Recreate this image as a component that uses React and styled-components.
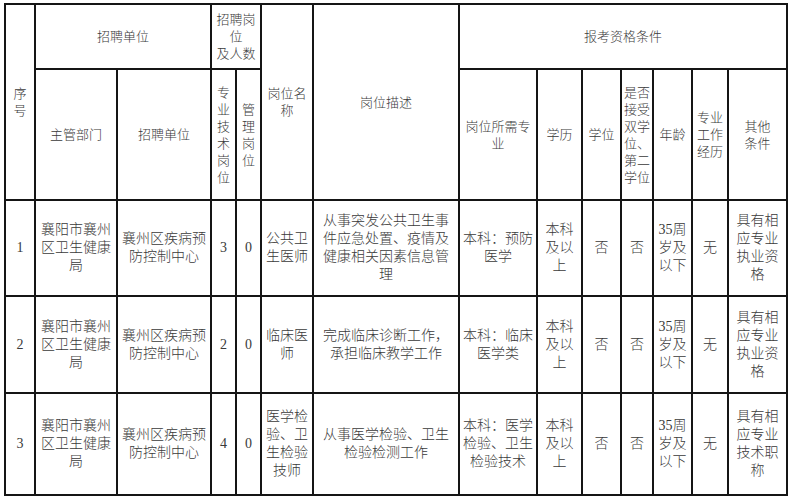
import React from 'react'
import styled, { createGlobalStyle } from 'styled-components'

const GlobalStyle = createGlobalStyle`
    html, body {
        margin: 0;
        padding: 0;
        background: #ffffff;
    }
`

const Page = styled.div`
    width: 792px;
    height: 500px;
    padding: 3px 0 0 4px;
    box-sizing: border-box;
    background: #ffffff;
    font-family: "Liberation Serif", "Noto Sans CJK SC", serif;
    font-weight: 300;
    color: #3a3a3a;
`

const Table = styled.table`
    width: 784px;
    table-layout: fixed;
    border-collapse: collapse;
    border: 2px solid #151515;
`

const Row = styled.tr`
    height: ${p => p.$h}px;
`

const HeadCell = styled.td`
    border: 2px solid #151515;
    padding: 0 2px;
    text-align: center;
    vertical-align: middle;
    font-size: 13px;
    line-height: 17px;
    white-space: nowrap;
    overflow: hidden;
`

const Cell = styled.td`
    border: 2px solid #151515;
    padding: 0 2px;
    text-align: center;
    vertical-align: middle;
    font-size: 14px;
    line-height: 18px;
    white-space: nowrap;
    overflow: hidden;
`

const colWidths = [30, 82, 94, 25, 25, 52, 146, 78, 45, 39, 32, 39, 36, 59]

const Lines = ({ text }) => {
    const parts = text.split('|')
    return parts.map((line, i) => (
        <React.Fragment key={i}>
            {line}
            {i < parts.length - 1 && <br />}
        </React.Fragment>
    ))
}

const rows = [
    {
        h: 96,
        cells: ['1', '襄阳市襄州|区卫生健康|局', '襄州区疾病预|防控制中心', '3', '0', '公共卫|生医师',
            '从事突发公共卫生事|件应急处置、疫情及|健康相关因素信息管|理', '本科：预防|医学', '本科|及以|上',
            '否', '否', '35周|岁及|以下', '无', '具有相|应专业|执业资|格'],
    },
    {
        h: 97,
        cells: ['2', '襄阳市襄州|区卫生健康|局', '襄州区疾病预|防控制中心', '2', '0', '临床医|师',
            '完成临床诊断工作，|承担临床教学工作', '本科：临床|医学类', '本科|及以|上',
            '否', '否', '35周|岁及|以下', '无', '具有相|应专业|执业资|格'],
    },
    {
        h: 102,
        cells: ['3', '襄阳市襄州|区卫生健康|局', '襄州区疾病预|防控制中心', '4', '0', '医学检|验、卫|生检验|技师',
            '从事医学检验、卫生|检验检测工作', '本科：医学|检验、卫生|检验技术', '本科|及以|上',
            '否', '否', '35周|岁及|以下', '无', '具有相|应专业|技术职|称'],
    },
]

const subHeads = ['主管部门', '招聘单位', '专|业|技|术|岗|位', '管|理|岗|位']
const qualHeads = ['岗位所需专|业', '学历', '学位', '是否|接受|双学|位、|第二|学位', '年龄', '专业|工作|经历', '其他|条件']

const App = () => {
    return (
        <Page>
            <GlobalStyle />
            <Table>
                <colgroup>
                    {colWidths.map((w, i) => <col key={i} style={{ width: w }} />)}
                </colgroup>
                <tbody>
                    <Row $h={65}>
                        <HeadCell rowSpan={2}><Lines text="序|号" /></HeadCell>
                        <HeadCell colSpan={2}>招聘单位</HeadCell>
                        <HeadCell colSpan={2}><Lines text="招聘岗|位|及人数" /></HeadCell>
                        <HeadCell rowSpan={2}><Lines text="岗位名|称" /></HeadCell>
                        <HeadCell rowSpan={2}>岗位描述</HeadCell>
                        <HeadCell colSpan={7}>报考资格条件</HeadCell>
                    </Row>
                    <Row $h={131}>
                        {subHeads.map((t, i) => <HeadCell key={i}><Lines text={t} /></HeadCell>)}
                        {qualHeads.map((t, i) => <HeadCell key={i}><Lines text={t} /></HeadCell>)}
                    </Row>
                    {rows.map((r, ri) => (
                        <Row key={ri} $h={r.h}>
                            {r.cells.map((c, ci) => <Cell key={ci}><Lines text={c} /></Cell>)}
                        </Row>
                    ))}
                </tbody>
            </Table>
        </Page>
    )
}

export default App
